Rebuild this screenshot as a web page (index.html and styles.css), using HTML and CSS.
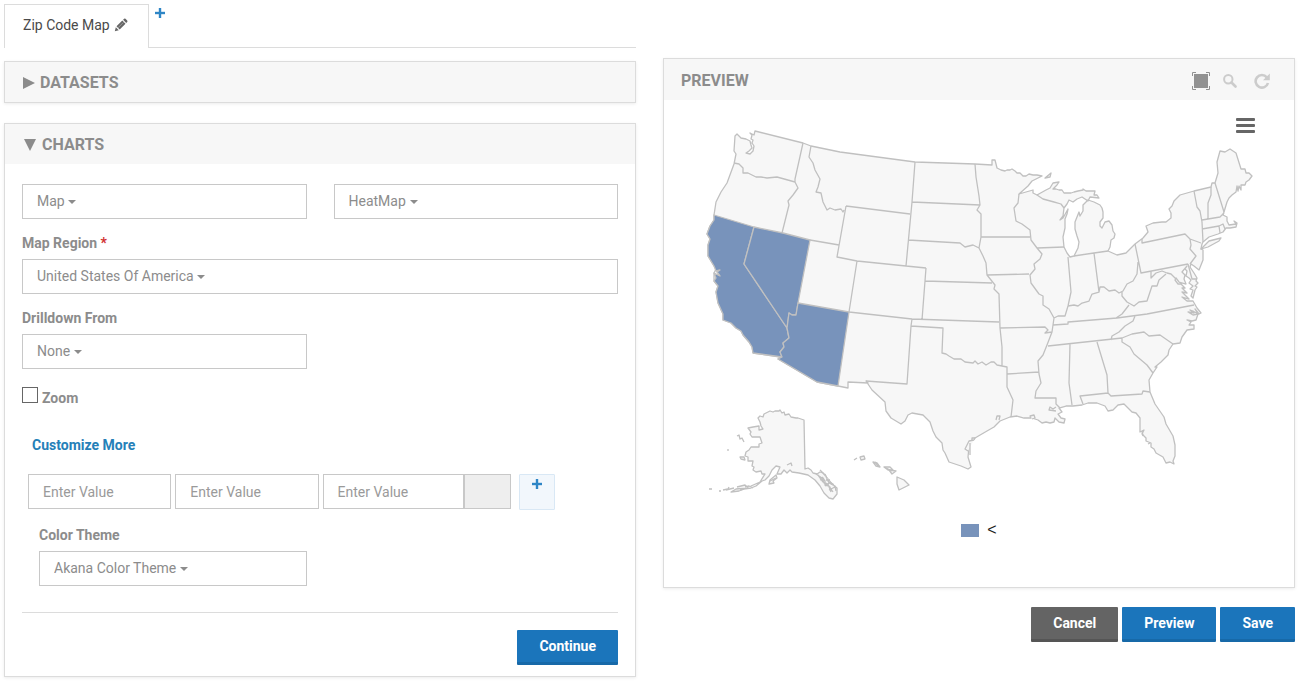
FILE: index.html
```html
<!DOCTYPE html>
<html lang="en">
<head>
<meta charset="utf-8">
<meta name="viewport" content="width=device-width, initial-scale=1">
<title>Zip Code Map</title>
<link rel="stylesheet" href="styles.css">
</head>
<body>
<main class="layout">
  <section class="editor">
    <nav class="tabs">
      <div class="tab">
        <span>Zip Code Map</span>
        <button class="icon-btn" type="button" aria-label="Rename">
          <svg class="pencil" viewBox="0 0 14 14"><path d="M.8 13.200l1-4 3 3zM2.500 8.300l5.800-5.800 3.200 3.200-5.800 5.800zM9.100 1.800l1-1q.7-.6 1.400 0l1.700 1.700q.6.7 0 1.400l-1 1z" fill="#666"/><path d="M4 9.800l5.300-5.300" stroke="#aaa" stroke-width=".8"/></svg>
        </button>
      </div>
      <div class="tab-rest">
        <button class="icon-btn" type="button" aria-label="Add tab">
          <svg class="plus" viewBox="0 0 10 10"><path d="M4 0h2v4h4v2H6v4H4V6H0V4h4z" fill="#2f87c6" stroke="#2f87c6" stroke-width=".4"/></svg>
        </button>
      </div>
    </nav>

    <section class="panel">
      <h2 class="panel-title"><svg class="arrow" viewBox="0 0 12 12"><path d="M0 0l12 6-12 6z" fill="#8c8c8c"/></svg>DATASETS</h2>
    </section>

    <section class="panel">
      <h2 class="panel-title"><svg class="arrow arrow-open" viewBox="0 0 12 12"><path d="M0 0h12L6 12z" fill="#8c8c8c"/></svg>CHARTS</h2>
      <form class="form">
        <div class="row">
          <div class="select"><select aria-label="Chart type"><option>Map</option></select><i class="caret"></i></div>
          <div class="select"><select aria-label="Map type"><option>HeatMap</option></select><i class="caret"></i></div>
        </div>
        <label class="label" for="region">Map Region <span class="required">*</span></label>
        <div class="select"><select id="region"><option>United States Of America</option></select><i class="caret"></i></div>
        <label class="label" for="drill">Drilldown From</label>
        <div class="row">
          <div class="select"><select id="drill"><option>None</option></select><i class="caret"></i></div>
        </div>
        <div class="check"><input type="checkbox" id="zoom"><label for="zoom">Zoom</label></div>
        <a class="more" href="#custom">Customize More</a>
        <div class="values" id="custom">
          <input class="text" type="text" placeholder="Enter Value" aria-label="From">
          <input class="text" type="text" placeholder="Enter Value" aria-label="To">
          <div class="color">
            <input class="text" type="text" placeholder="Enter Value" aria-label="Color">
            <button class="swatch" type="button" aria-label="Pick color"></button>
          </div>
          <button class="add" type="button" aria-label="Add value"><svg class="plus" viewBox="0 0 10 10"><path d="M4 0h2v4h4v2H6v4H4V6H0V4h4z" fill="#2f87c6" stroke="#2f87c6" stroke-width=".4"/></svg></button>
        </div>
        <div class="row">
          <div class="theme">
            <label class="label" for="theme">Color Theme</label>
            <div class="select"><select id="theme"><option>Akana Color Theme</option></select><i class="caret"></i></div>
          </div>
        </div>
        <div class="form-footer"><button class="btn" type="button">Continue</button></div>
      </form>
    </section>
  </section>

  <section class="preview">
    <section class="panel">
      <header class="preview-head">
        <h2>PREVIEW</h2>
        <div class="tools">
          <button class="icon-btn" type="button" aria-label="Fit"><svg class="fit" viewBox="0 0 18 18"><path d="M2 2h14v14H2z" fill="#929292"/><path d="M.5 4V.5H4M14 .5h3.500V4M17.500 14v3.500H14M4 17.500H.5V14" fill="none" stroke="#929292"/></svg></button>
          <button class="icon-btn" type="button" aria-label="Zoom in"><svg class="glass" viewBox="0 0 14 14"><circle cx="5.300" cy="5.300" r="4.200" fill="none" stroke="#ccc" stroke-width="2"/><path d="M8.500 8.500l4 4" stroke="#ccc" stroke-width="2.600" stroke-linecap="round"/></svg></button>
          <button class="icon-btn" type="button" aria-label="Refresh"><svg class="refresh" viewBox="0 0 16 16"><path d="M12.800 4.300A6.300 6.300 0 1 0 14 10" fill="none" stroke="#ccc" stroke-width="2.600"/><path d="M15.800.5v6.700H9z" fill="#ccc"/></svg></button>
        </div>
      </header>
      <div class="chart">
        <button class="menu icon-btn" type="button" aria-label="Chart menu"><i></i><i></i><i></i></button>
        <svg class="map" viewBox="664 100 630 410" role="img" aria-label="Map of the United States">
          <g class="land">
            <path d="M735 136L737 134 739 136 741 138 746 139 750 141 751 145 752 148 749 151 746 153 750 154 753 151 754 146 752 143 753 140 751 139 752 135 750 133 754 135 755 131 803 143 811 146 840 152 870 156 915 162 975 164 992 165 992 160 995 160 997 168 1001 170 1005 171 1007 170 1010 170 1012 169 1015 171 1017 173 1020 173 1023 176 1026 176 1029 174 1033 175 1037 175 1042 176 1032 181 1028 186 1019 194 1026 192 1033 190 1033 193 1037 195 1046 190 1050 188 1053 183 1059 182 1057 185 1053 189 1056 189 1059 190 1062 190 1064 193 1067 193 1071 193 1074 192 1078 191 1083 190 1083 189 1086 191 1091 191 1095 191 1094 195 1097 195 1099 198 1090 197 1088 201 1082 197 1077 199 1073 202 1069 200 1067 204 1064 208 1063 216 1060 220 1063 218 1068 209 1067 214 1065 219 1065 228 1063 237 1064 247 1067 253 1070 257 1074 256 1078 248 1079 242 1077 236 1075 229 1075 222 1077 217 1079 212 1080 216 1083 211 1083 205 1088 200 1094 202 1100 205 1102 208 1103 212 1103 218 1100 222 1100 226 1102 228 1105 222 1109 221 1112 225 1113 231 1115 234 1114 238 1111 240 1110 247 1108 251 1117 255 1126 253 1135 244 1143 238 1148 232 1146 226 1153 223 1162 222 1166 222 1171 218 1171 213 1169 209 1172 206 1174 201 1180 195 1194 191 1211 187 1212 183 1215 183 1218 173 1217 162 1220 151 1225 152 1230 149 1236 153 1241 169 1245 169 1246 173 1249 173 1252 176 1249 180 1246 182 1245 185 1241 185 1241 190 1239 186 1238 191 1237 186 1236 192 1232 195 1229 198 1227 202 1224 212 1223 215 1227 217 1227 221 1229 225 1236 224 1234 221 1237 223 1236 227 1230 228 1226 228 1223 232 1218 234 1209 237 1203 242 1202 244 1201 249 1203 250 1203 260 1199 270 1194 266 1191 264 1190 267 1194 273 1197 278 1196 281 1198 283 1195 286 1197 287 1195 290 1193 298 1191 296 1193 290 1190 289 1193 286 1189 283 1191 280 1189 278 1186 276 1187 271 1185 269 1187 266 1182 272 1185 275 1184 279 1186 284 1179 282 1176 278 1175 280 1178 284 1181 284 1185 288 1182 288 1187 293 1182 292 1189 299 1182 297 1187 301 1193 301 1197 308 1201 313 1199 314 1195 309 1198 314 1193 311 1190 310 1194 313 1188 312 1193 315 1198 314 1196 320 1192 321 1187 320 1191 322 1189 325 1194 325 1194 329 1187 330 1182 337 1180 343 1173 344 1169 350 1168 355 1161 362 1155 367 1157 367 1153 373 1149 380 1150 392 1155 404 1164 417 1166 424 1173 436 1175 445 1175 456 1173 461 1174 464 1170 462 1166 463 1163 457 1156 453 1154 449 1151 447 1151 443 1146 441 1146 438 1142 434 1144 430 1140 432 1140 418 1136 413 1132 412 1124 404 1118 405 1113 410 1108 411 1105 406 1097 403 1088 403 1082 405 1073 406 1066 406 1059 408 1062 412 1058 414 1061 418 1065 419 1064 423 1059 422 1055 418 1054 422 1050 423 1046 422 1042 423 1038 420 1032 418 1024 418 1017 416 1010 417 1000 421 994 427 987 431 975 438 972 440 969 447 968 457 971 467 968 469 961 466 949 462 945 453 943 450 942 443 936 437 933 431 930 422 923 415 912 413 908 415 905 421 901 424 891 418 886 411 885 402 872 390 866 381 868 383 848 382 848 388 838 386 817 382 778 359 780 357 753 353 752 347 749 342 743 335 741 331 736 328 731 323 723 320 723 314 718 303 716 292 718 286 714 281 714 273 716 269 714 266 708 256 708 245 710 239 707 234 710 226 714 220 714 215 716 202 721 192 727 183 734 164 736 154 734 151Z"/>
            <path d="M1201 249l8-8 12-3-2 3-11 6zM1045 178l6-5-1 4z"/>
            <path d="M758 418l2-2 3 1 1-3 4-2 2-1 3 1 2-1 4 0 1-1 2 3 2-1 1 3 4-1 2 3 5 1 2 0 3 1 3 1 1 49 3-1 3 2 2 3 4 1 3-2 3 1 5 6 4 5 5 4 0 6-4 5-4-1-5-5-4-7-5-6-7-5-9-2-7-1-2-2-3 3-3-3-3 4-4 0 3-7-4-1-4 4-3 6-4 4-3 1-6 5-5 2-7 1-5 2-8 1 5-3 10-1 5-2 9-4 5-8-3 0-1-3-5 1-3-2 1-3-2-1 1-5-5 0 0-4-3-1 1-4 3-2 2-3 8 0 0-3 3-1-2-6-8 0-2-3 1-2-3-4 5-1 6-1 0 4 4-1-2-3-1-4z"/>
            <path d="M897 477l7 3 5 5-6 3-4 2-2-6 0-4zM860 457l4-1 1 3-4 1zM873 462l4 1 3 4-4-1zM884 467l6 0 3 3-5 0zM889 470l7 1-4 3zM740 457l4 0 1 3-4-1zM770 480l6-5 1 3-4 3 1 2-5 1z"/>
            <path d="M820 470l6 6 2 5 5 3 3 5M816 474l6 4 2 5 6 4 1 5M818 475l5 7 5 2 3 8M825 474l4 9 6 3 1 5M822 477l3 4 0 4 4 1 4 6M820 480l4-2M825 486l4-3M829 490l6-3M826 480l4 0M770 481l6-3M787 465l4-2 1 3M737 436l2-1 1 4 2-1 2 4M728 449v2M737 487l8-2 3 3M745 487l4-1 4 2M740 490l4-1M709 489h3M719 491h2M723 490l5-1 1-2M726 490l8-2M854 460l3-2M875 462l3 4M886 468l6 3M974 440l-5 1-4 8 3 2M970 443l0 12M996 420l1-4 3 0-1 4M972 440l0-2 3 0-1 2M1031 418l-1-2 4-1 1 3-3 1M1056 411l-7-1 1-3 3 2 3-2M1142 431l1 5M1150 443l-2 1"/>
          </g>
          <g class="hot">
            <path d="M714 215L754 227 744 264 787 328 789 338 783 343 784 347 780 352 782 357 753 353 752 347 749 342 743 335 741 331 736 328 731 323 723 320 723 314 718 303 716 292 718 286 714 281 716 278 714 273 720 276 717 272 720 270 716 271 714 266 708 256 708 245 710 239 707 234 710 226 714 220Z"/>
            <path d="M754 227L783 233 810 240 798 303 796 315 792 315 789 313 787 328 744 264Z"/>
            <path d="M798 303L849 312 838 386 817 382 778 359 782 357 780 352 784 347 783 343 789 338 787 328 789 313 792 315 796 315Z"/>
          </g>
          <path class="borders" d="M734 163L739 164 743 168 743 173 748 173 752 175 756 177 761 177 767 178 777 177 795 182M803 143L795 179 795 182 798 188 793 195 788 201 789 205 782 233M811 146L809 157 813 163 815 170 820 179 818 187 816 192 821 193 823 202 827 210 830 208 835 210 841 209 843 212 844 210M846 206L837 257 857 261 906 266 926 268M846 206L910 214M810 240L839 245M857 261L849 312M849 312L912 319 999 322M926 268L922 320M925 281L992 283M915 162L912 202 906 266M912 202L980 205M975 164L976 177 979 196 980 205 977 210 981 214 981 237 979 248 983 256 986 263 987 275 995 285 994 289 999 294 1000 328 1002 347 1002 366 1007 367 1007 387 1013 400 1011 417M908 240L960 243 965 247 973 245 979 248M981 237L1030 237M1019 194L1018 203 1014 208 1016 221 1022 224 1030 230 1031 240 1037 248 1042 254 1040 259 1034 264 1035 269 1030 275 1031 283 1039 294 1043 296 1043 305 1049 309 1054 318 1053 325 1052 332 1047 345 1043 355 1038 361 1039 374 1041 383 1036 391 1035 398 1056 398 1056 404 1060 408M1037 248L1064 247M987 275L1029 274M1037 195L1043 199 1054 202 1061 204 1064 208M1068 257L1071 292 1068 306 1065 316 1058 316 1054 318M1068 306L1074 305 1078 306 1082 303 1089 301 1092 294 1099 292 1100 287 1104 287 1109 291 1115 290 1119 293 1123 291 1127 284 1133 281 1137 274 1138 262M1074 256L1094 253 1108 251M1094 253L1099 292M1135 244L1141 273 1188 264M1151 271L1151 278 1156 273 1162 271 1167 273 1171 274 1176 279M1166 274L1159 280 1157 286 1152 286 1147 301 1139 302 1134 306 1127 302 1122 296 1122 291M1129 305L1122 314 1116 318M1053 325L1068 324 1068 322 1117 318 1147 314 1194 305M1135 316L1133 321 1125 326 1119 332 1112 336 1111 340M1048 346L1122 338 1132 334 1144 332 1149 336 1160 335 1173 344M1122 338L1122 342 1130 347 1134 354 1147 365 1153 373M1070 344L1069 383 1072 405M1097 342L1107 375 1108 393 1111 396 1142 394 1143 391 1150 392M1108 393L1080 396 1083 404M1000 328L1045 327 1048 330 1045 333 1052 332M1007 374L1039 372M912 319L911 326 943 328 942 353 946 354 949 356 954 359 961 359 965 362 973 363 975 361 978 364 982 362 986 365 991 362 994 362 997 365 1002 366M911 326L907 384 866 381M1142 239L1142 243 1185 234 1190 239 1201 243M1190 239L1191 245 1190 249 1196 256 1190 264M1194 191L1197 207 1200 211 1202 222 1203 242M1211 187L1211 195 1208 203 1208 219M1202 220L1220 217 1224 213M1215 183L1224 212M1202 229L1219 226 1223 224 1225 229M1219 226L1220 233M1188 264L1192 279 1197 279"/>
        </svg>
        <div class="legend"><i></i><span>&lt;</span></div>
      </div>
    </section>
    <div class="actions">
      <button class="btn btn-dark" type="button">Cancel</button>
      <button class="btn" type="button">Preview</button>
      <button class="btn" type="button">Save</button>
    </div>
  </section>
</main>
</body>
</html>
```
FILE: styles.css
```css
* { box-sizing: border-box; }
body {
  margin: 0;
  background: #fff;
  color: #8c8c8c;
  font: 14px/20px Roboto, "Liberation Sans", sans-serif;
}
button, input, select { font: inherit; color: inherit; }
h2 { margin: 0; font-size: 16px; line-height: 20px; font-weight: 700; }
svg { display: block; }

.layout {
  display: grid;
  grid-template-columns: 1fr 1fr;
  gap: 27px;
  padding: 4px 5px 4px 4px;
}
.icon-btn { padding: 0; border: 0; background: none; cursor: pointer; }

.tabs { display: flex; margin-bottom: 13px; }
.tab {
  display: flex;
  align-items: center;
  gap: 4px;
  height: 44px;
  padding: 0 20px 3px 18px;
  border: 1px solid #dcdcdc;
  border-bottom: 0;
  color: #4a4a4a;
}
.pencil { width: 14px; height: 14px; }
.tab-rest {
  display: flex;
  flex: 1;
  align-items: flex-start;
  padding: 4px 6px;
  border-bottom: 1px solid #dcdcdc;
}
.plus { width: 10px; height: 10px; }

.panel { border: 1px solid #dcdcdc; box-shadow: 0 1px 3px rgba(0, 0, 0, .08); }
.editor .panel + .panel { margin-top: 20px; }
.panel-title {
  display: flex;
  align-items: center;
  gap: 5px;
  padding: 11px 18px 9px;
  background: #f7f7f7;
}
.arrow { width: 12px; height: 12px; }
.arrow-open { margin: 0 1px; }

.form { padding: 20px 17px 11px; }
.row { display: grid; grid-template-columns: 1fr 1fr; gap: 27px; }
.select {
  display: flex;
  align-items: center;
  height: 35px;
  padding: 0 14px 1px;
  border: 1px solid #c8c8c8;
}
.select select {
  appearance: none;
  padding: 0;
  border: 0;
  background: none;
  outline-offset: 4px;
}
.caret {
  margin: 2px 0 0 3px;
  border: 4px solid transparent;
  border-top-color: #8c8c8c;
  border-bottom: 0;
  pointer-events: none;
}
.label { display: block; margin: 14px 0 6px; font-weight: 700; }
.required { color: #d12f2f; }
.check { display: flex; gap: 4px; margin-top: 18px; font-weight: 700; }
.check input {
  appearance: none;
  width: 16px;
  height: 16px;
  margin: 0;
  border: 1px solid #666;
}
.check label { padding-top: 1px; }
.more {
  display: block;
  width: max-content;
  margin: 27px 0 19px 10px;
  color: #2580b8;
  font-weight: 700;
  text-decoration: none;
}
.values {
  display: grid;
  grid-template-columns: 143fr 143fr 188fr 40px;
  gap: 4px;
  margin: 0 63px 15px 6px;
}
.text {
  min-width: 0;
  width: 100%;
  height: 35px;
  padding: 0 14px;
  border: 1px solid #c8c8c8;
}
.text::placeholder { color: #9a9a9a; }
.color { display: flex; height: 35px; }
.swatch { flex: 0 0 47px; border: 1px solid #c8c8c8; background: #eee; }
.add {
  display: flex;
  justify-content: center;
  height: 36px;
  margin-left: 4px;
  width: 36px;
  padding: 4px 0;
  border: 1px solid #d9e8f5;
  border-radius: 1px;
  background: #f2f7fc;
}
.theme { padding-left: 17px; }
.theme .label { margin-top: 0; }
.form-footer {
  display: flex;
  justify-content: flex-end;
  margin-top: 26px;
  padding-top: 17px;
  border-top: 1px solid #dcdcdc;
}
.btn {
  height: 35px;
  padding: 0 22px;
  border: 0;
  border-bottom: 3px solid #1769a8;
  border-radius: 1px;
  background: #1b75bb;
  color: #fff;
  font-weight: 700;
}
.btn-dark { border-color: #555; background: #646464; }

.preview { padding-top: 54px; }
.preview-head {
  display: flex;
  justify-content: space-between;
  align-items: center;
  height: 41px;
  padding: 2px 24px 0 17px;
  background: #f7f7f7;
}
.tools { display: flex; align-items: center; gap: 13px; }
.fit { width: 18px; height: 18px; }
.glass { width: 14px; height: 14px; }
.refresh { width: 16px; height: 16px; margin-left: 4px; }
.chart { position: relative; padding-bottom: 47px; }
.map { width: 100%; height: auto; stroke: #c0c0c0; stroke-width: 1.3; stroke-linejoin: round; }
.land { fill: #f7f7f7; }
.hot { fill: #7893bb; }
.borders { fill: none; }
.menu {
  position: absolute;
  top: 18px;
  right: 39px;
  display: grid;
  gap: 3px;
}
.menu i { width: 19px; height: 3px; border-radius: 1px; background: #666; }
.legend { display: flex; justify-content: center; align-items: center; gap: 8px; padding-top: 10px; }
.legend i { width: 18px; height: 13px; background: #7893bb; }
.legend span { color: #222; font: 16px/20px "Liberation Sans", sans-serif; }
.actions { display: flex; justify-content: flex-end; gap: 4px; margin-top: 19px; }
```
